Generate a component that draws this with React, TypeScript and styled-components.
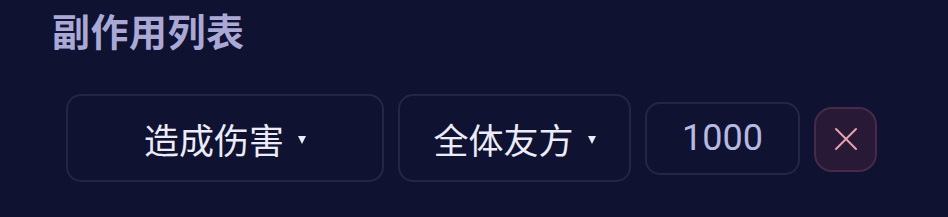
import React from "react";
import styled, { createGlobalStyle } from "styled-components";

const Global = createGlobalStyle`
  html, body { margin: 0; padding: 0; background: #0f1230; }
  body { width: 948px; height: 217px; overflow: hidden; font-family: "Noto Sans CJK SC", "Noto Sans", sans-serif; }
`;

const Page = styled.div`
  display: flex;
  flex-direction: column;
  padding: 4px 0 0 52px;
`;

const Title = styled.h2`
  margin: 0;
  font-size: 38px;
  line-height: 52px;
  font-weight: 700;
  color: #aaa9d6;
  letter-spacing: 0.5px;
`;

const Row = styled.div`
  display: flex;
  align-items: center;
  gap: 14px;
  margin-top: 38px;
  margin-left: 14px;
`;

const Select = styled.div<{ $w: number }>`
  box-sizing: border-box;
  width: ${(p) => p.$w}px;
  height: 88px;
  border: 2px solid #22274a;
  border-radius: 15px;
  display: flex;
  align-items: center;
  justify-content: center;
  gap: 14px;
  color: #ecebf8;
  font-size: 35px;
  font-weight: 400;
`;

const Caret = styled.span`
  width: 0;
  height: 0;
  border-left: 4.5px solid transparent;
  border-right: 4.5px solid transparent;
  border-top: 8px solid #ecebf8;
  margin-top: 4px;
`;

const NumberBox = styled.div`
  box-sizing: border-box;
  width: 155px;
  height: 73px;
  border: 2px solid #22274a;
  border-radius: 15px;
  display: flex;
  align-items: center;
  justify-content: center;
  font-family: Roboto, "Noto Sans", sans-serif;
  font-size: 36px;
  font-weight: 400;
  color: #b6b9e2;
`;

const DeleteButton = styled.button`
  box-sizing: border-box;
  width: 63px;
  height: 65px;
  margin-top: 2px;
  border: 2px solid #472a47;
  background: #281a36;
  border-radius: 18px;
  display: flex;
  align-items: center;
  justify-content: center;
  padding: 0;
  cursor: pointer;
`;

export default function App() {
  return (
    <>
      <Global />
      <Page>
        <Title>副作用列表</Title>
        <Row>
          <Select $w={318}>
            <span>造成伤害</span>
            <Caret />
          </Select>
          <Select $w={233}>
            <span>全体友方</span>
            <Caret />
          </Select>
          <NumberBox>1000</NumberBox>
          <DeleteButton aria-label="删除">
            <svg width="24" height="24" viewBox="0 0 24 24">
              <path d="M2 2 L22 22 M22 2 L2 22" stroke="#e8a0b0" strokeWidth="2" strokeLinecap="round" />
            </svg>
          </DeleteButton>
        </Row>
      </Page>
    </>
  );
}
